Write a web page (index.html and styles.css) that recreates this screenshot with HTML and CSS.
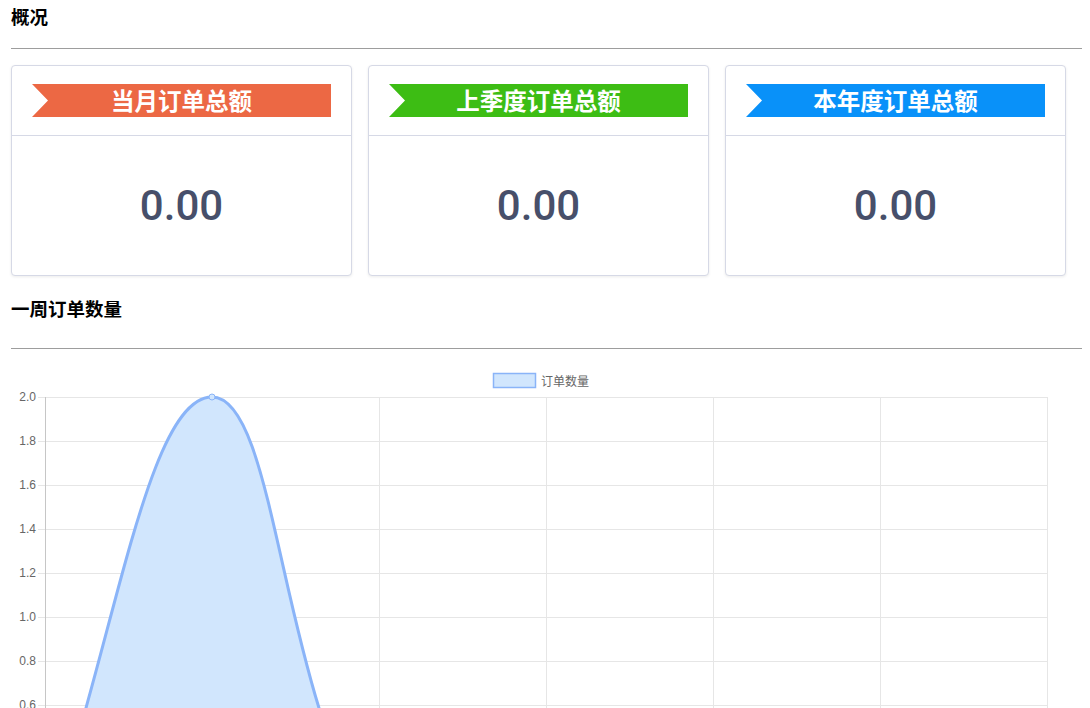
FILE: index.html
```html
<!DOCTYPE html>
<html lang="zh">
<head>
<meta charset="utf-8">
<title>概况</title>
<link rel="stylesheet" href="styles.css">
</head>
<body>
<div class="page">
  <h2 class="section-title">概况</h2>
  <hr class="divider">
  <div class="cards">
    <div class="card">
      <div class="card-head"><div class="ribbon ribbon-orange">当月订单总额</div></div>
      <div class="card-body">0.00</div>
    </div>
    <div class="card">
      <div class="card-head"><div class="ribbon ribbon-green">上季度订单总额</div></div>
      <div class="card-body">0.00</div>
    </div>
    <div class="card">
      <div class="card-head"><div class="ribbon ribbon-blue">本年度订单总额</div></div>
      <div class="card-body">0.00</div>
    </div>
  </div>
  <h2 class="section-title section-title-2">一周订单数量</h2>
  <hr class="divider divider-2">
  <div class="chart">
    <svg class="chart-svg" width="1070" height="359" viewBox="11 349 1070 359" xmlns="http://www.w3.org/2000/svg">
      <rect x="493.5" y="373.5" width="42" height="14" fill="#d1e6fd" stroke="#8ab4f8" stroke-width="1.5"/>
      <text x="541" y="386" class="lbl">订单数量</text>
      <g stroke="#e6e6e6" stroke-width="1">
        <line x1="38" y1="397.5" x2="1047" y2="397.5"/>
        <line x1="38" y1="441.5" x2="1047" y2="441.5"/>
        <line x1="38" y1="485.5" x2="1047" y2="485.5"/>
        <line x1="38" y1="529.5" x2="1047" y2="529.5"/>
        <line x1="38" y1="573.5" x2="1047" y2="573.5"/>
        <line x1="38" y1="617.5" x2="1047" y2="617.5"/>
        <line x1="38" y1="661.5" x2="1047" y2="661.5"/>
        <line x1="38" y1="705.5" x2="1047" y2="705.5"/>
        <line x1="212.5" y1="397" x2="212.5" y2="720"/>
        <line x1="379.5" y1="397" x2="379.5" y2="720"/>
        <line x1="546.5" y1="397" x2="546.5" y2="720"/>
        <line x1="713.5" y1="397" x2="713.5" y2="720"/>
        <line x1="880.5" y1="397" x2="880.5" y2="720"/>
        <line x1="1047.5" y1="397" x2="1047.5" y2="720"/>
      </g>
      <line x1="45.5" y1="397" x2="45.5" y2="720" stroke="#c6c6c6" stroke-width="1"/>
      <g class="ticks">
        <text x="36" y="401">2.0</text>
        <text x="36" y="445">1.8</text>
        <text x="36" y="489">1.6</text>
        <text x="36" y="533">1.4</text>
        <text x="36" y="577">1.2</text>
        <text x="36" y="621">1.0</text>
        <text x="36" y="665">0.8</text>
        <text x="36" y="709">0.6</text>
      </g>
      <path d="M45,837 C111.8,661 145.2,397 212,397 C278.8,397 280.4,707.1 379,837 L1047,837 L1047,900 L45,900 Z" fill="#d1e6fd"/>
      <path d="M45,837 C111.8,661 145.2,397 212,397 C278.8,397 280.4,707.1 379,837 L1047,837" fill="none" stroke="#8ab4f8" stroke-width="3"/>
      <circle cx="212" cy="397" r="3" fill="#d1e6fd" stroke="#8ab4f8" stroke-width="1"/>
    </svg>
  </div>
</div>
</body>
</html>
```
FILE: styles.css
```css
html, body {
  margin: 0;
  padding: 0;
  overflow: hidden;
  background: #fff;
}
.page {
  padding: 0 8px 0 11px;
  font-family: "Noto Sans CJK SC", "Liberation Sans", sans-serif;
}
.section-title {
  margin: 0;
  font-size: 18.5px;
  line-height: 33px;
  font-weight: 700;
  color: #000;
}
.section-title-2 {
  margin-top: 16px;
}
.divider {
  margin: 15px 0 0 0;
  height: 0;
  border: 0;
  border-top: 1px solid #9d9d9d;
}
.divider-2 {
  margin-top: 23px;
}
.cards {
  display: flex;
  gap: 16px;
  width: 1055px;
  margin-top: 16px;
}
.card {
  flex: 0 0 341px;
  box-sizing: border-box;
  border: 1px solid #d6d9e6;
  border-radius: 4px;
  box-shadow: 0 1px 3px rgba(0, 0, 0, 0.08);
  background: #fff;
}
.card-head {
  padding: 18px 20px;
  border-bottom: 1px solid #d6d9e6;
}
.ribbon {
  height: 33px;
  line-height: 33px;
  text-align: center;
  color: #fff;
  font-size: 23.5px;
  font-weight: 700;
  clip-path: polygon(0 0, 100% 0, 100% 100%, 0 100%, 16px 50%);
}
.ribbon-orange { background: #ec6844; }
.ribbon-green { background: #3dbd14; }
.ribbon-blue { background: #0991f9; }
.card-body {
  height: 139px;
  display: flex;
  align-items: center;
  justify-content: center;
  font-family: Roboto, "Liberation Sans", Arial, sans-serif;
  font-weight: 500;
  font-size: 42px;
  color: #474f6a;
}
.chart {
  margin-top: 0;
}
.chart-svg {
  display: block;
}
.lbl {
  font-family: "Noto Sans CJK SC", "Liberation Sans", sans-serif;
  font-size: 12px;
  fill: #666;
}
.ticks text {
  font-family: "Liberation Sans", Arial, sans-serif;
  font-size: 12px;
  fill: #666;
  text-anchor: end;
}
```
